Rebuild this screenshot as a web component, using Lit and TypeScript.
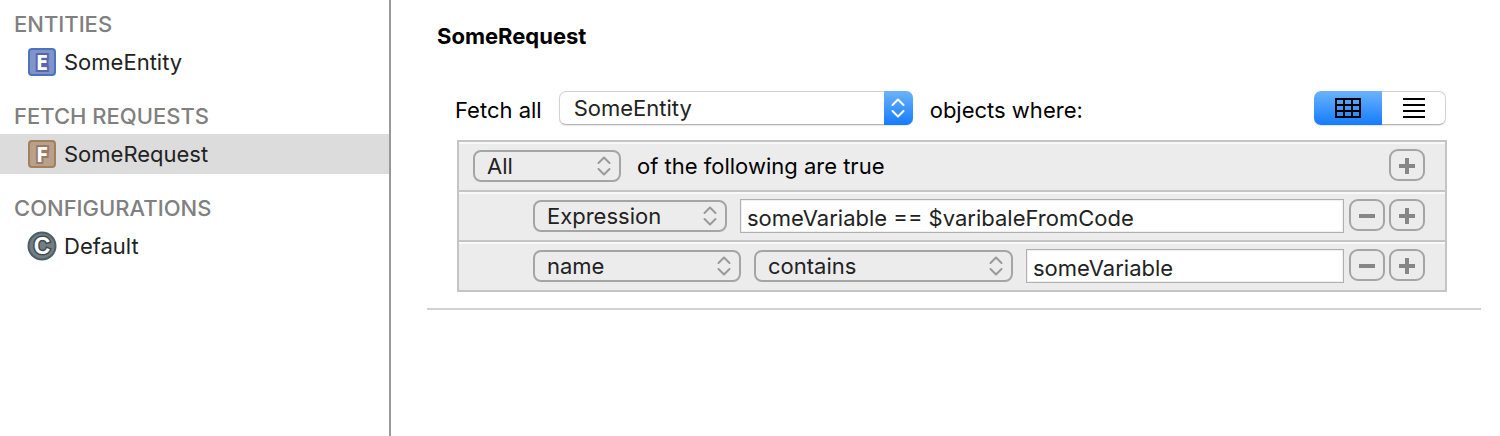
import { LitElement, html, svg, css } from "lit";
import { customElement, property, state } from "lit/decorators.js";

@customElement("entity-badge")
class EntityBadge extends LitElement {
  @property() kind = "E";

  static styles = css`
    :host { display: block; width: 30px; height: 30px; }
    svg { display: block; overflow: visible; }
    text {
      font: bold 22px "Noto Sans", sans-serif;
      text-anchor: middle;
      fill: #fff;
      paint-order: stroke;
      stroke-width: 4px;
    }
    .box { stroke-width: 2px; }
    .entity .box { fill: #8094ca; stroke: #4a74bc; }
    .entity text { stroke: #5566b0; }
    .fetch .box { fill: #b9a088; stroke: #a17f5f; }
    .fetch text { stroke: #9a7b66; }
    .config .box { fill: #6f7f84; stroke: #4e5e64; }
    .config text { stroke: #3f4b50; font: bold 23px "Liberation Sans", sans-serif; stroke-width: 3px; }
  `;

  render() {
    const names: Record<string, string> = { E: "entity", F: "fetch", C: "config" };
    return html`<svg class=${names[this.kind]} width="30" height="30" viewBox="0 0 30 30" aria-hidden="true">
      ${this.kind === "C"
        ? svg`<circle class="box" cx="15" cy="15" r="13.5"></circle>`
        : svg`<rect class="box" x="2" y="2" width="26" height="26" rx="3"></rect>`}
      <text x="15" y="23">${this.kind}</text>
    </svg>`;
  }
}

@customElement("pop-up")
class PopUp extends LitElement {
  @property() label = "";
  @property({ type: Array }) options: string[] = [];
  @property({ type: Boolean, reflect: true }) primary = false;

  static styles = css`
    :host { display: grid; flex: none; color: #222; }
    select, .arrows { grid-area: 1 / 1; }
    select {
      appearance: none;
      box-sizing: border-box;
      width: 100%;
      height: 32px;
      margin: 0;
      padding: 0 36px 0 12px;
      font: inherit;
      color: inherit;
      background: #ececec;
      border: 2px solid #a5a5a5;
      border-radius: 8px;
    }
    .arrows {
      justify-self: end;
      display: grid;
      place-items: center;
      width: 34px;
      pointer-events: none;
      color: #999;
    }
    path { fill: none; stroke: currentColor; stroke-width: 2px; stroke-linecap: round; stroke-linejoin: round; }
    :host([primary]) select {
      height: 34px;
      padding-left: 14px;
      background: #fff;
      border: 1px solid #d2d2d2;
      border-bottom-color: #b4b4b4;
      border-radius: 7px;
      box-shadow: 0 1px 1px #0000001a;
    }
    :host([primary]) .arrows {
      width: 29px;
      color: #fff;
      background: linear-gradient(#6cb3fa, #147bff);
      border-radius: 0 7px 7px 0;
    }
  `;

  render() {
    return html`
      <select aria-label=${this.label}>${this.options.map((o) => html`<option>${o}</option>`)}</select>
      <span class="arrows">
        <svg width="14" height="20" viewBox="0 0 14 20" aria-hidden="true">
          <path d="M1.5 7 7 1.5 12.5 7M1.5 13 7 18.5 12.5 13"></path>
        </svg>
      </span>`;
  }
}

@customElement("row-buttons")
class RowButtons extends LitElement {
  @property({ type: Boolean }) removable = false;

  static styles = css`
    :host { display: flex; gap: 4px; padding-bottom: 2px; }
    button {
      display: grid;
      place-items: center;
      width: 36px;
      height: 32px;
      padding: 0;
      background: #ececec;
      border: 2px solid #a5a5a5;
      border-radius: 9px;
    }
    path { stroke: #868686; stroke-width: 4px; }
  `;

  render() {
    return html`
      ${this.removable
        ? html`<button type="button" aria-label="Remove">
            <svg width="16" height="18" viewBox="0 0 16 18"><path d="M0 10H16"></path></svg>
          </button>`
        : ""}
      <button type="button" aria-label="Add">
        <svg width="16" height="18" viewBox="0 0 16 18"><path d="M0 10H16M8 2V18"></path></svg>
      </button>`;
  }
}

@customElement("app-root")
class AppRoot extends LitElement {
  @state() private selected = "SomeRequest";

  private sections = [
    { title: "ENTITIES", kind: "E", items: ["SomeEntity"] },
    { title: "FETCH REQUESTS", kind: "F", items: ["SomeRequest"] },
    { title: "CONFIGURATIONS", kind: "C", items: ["Default"] },
  ];

  static styles = css`
    :host {
      display: flex;
      min-height: 100vh;
      font: 22px/28px Inter, sans-serif;
      color: #000;
      background: #fff;
    }
    nav {
      box-sizing: border-box;
      flex: none;
      width: 391px;
      padding-top: 6px;
      border-right: 2px solid #999;
    }
    section { margin-bottom: 16px; }
    h2 {
      margin: 0;
      padding-left: 14px;
      font-size: 22px;
      line-height: 36px;
      font-weight: 500;
      color: #808080;
    }
    .item {
      display: flex;
      align-items: center;
      gap: 7px;
      height: 40px;
      padding-left: 27px;
      color: #222;
      text-decoration: none;
    }
    .item.selected { background: #dcdcdc; }
    main { flex: 1; min-width: 0; padding: 22px 19px 0 36px; }
    h1 { margin: 0 10px; font-size: 22px; line-height: 28px; font-weight: 700; }
    .fetch {
      display: flex;
      align-items: center;
      gap: 17px;
      margin: 41px 35px 15px 28px;
    }
    .fetch span { padding-top: 4px; }
    .entity-choice { width: 354px; }
    .modes {
      display: flex;
      margin-left: auto;
      border-radius: 7px;
      box-shadow: 0 1px 1px #0000001a;
    }
    .mode {
      display: grid;
      place-items: center;
      box-sizing: border-box;
      width: 64px;
      height: 34px;
      padding: 0;
      background: #fff;
      border: 1px solid #d2d2d2;
      border-bottom-color: #b4b4b4;
      border-left: 0;
      border-radius: 0 7px 7px 0;
    }
    .mode.on {
      width: 68px;
      background: linear-gradient(#6cb3fa, #147bff);
      border: 0;
      border-radius: 7px 0 0 7px;
    }
    .mode path { fill: none; stroke: #000; stroke-width: 2px; }
    .rules {
      margin: 0 34px 16px 30px;
      border: 2px solid #c4c4c4;
      background: #ececec;
    }
    .rule {
      display: flex;
      align-items: center;
      gap: 5px;
      height: 48px;
      padding: 0 20px 0 74px;
      box-shadow: inset 0 2px #f9f9f9;
    }
    .rule + .rule { border-top: 2px solid #c4c4c4; }
    .rule.group { padding-left: 14px; }
    .fields { display: flex; flex: 1; min-width: 0; align-items: center; gap: 13px; }
    .group .fields { gap: 16px; }
    .quantifier { width: 148px; }
    .operand { width: 194px; }
    .attribute { width: 208px; }
    .operator { width: 259px; }
    input {
      box-sizing: border-box;
      flex: 1;
      min-width: 0;
      height: 34px;
      margin: 0;
      padding: 3px 6px 0;
      font: inherit;
      color: #222;
      background: #fff;
      border: 1px solid #b0b0b0;
      border-radius: 0;
      box-shadow: inset 0 0 0 1px #f0f0f0;
    }
    hr { margin: 0; border: 0; border-top: 2px solid #d2d2d2; }
  `;

  render() {
    return html`
      <nav>
        ${this.sections.map(
          (s) => html`<section>
            <h2>${s.title}</h2>
            ${s.items.map(
              (name) => html`<a
                class="item ${name === this.selected ? "selected" : ""}"
                href="#${name}"
                @click=${() => (this.selected = name)}
                ><entity-badge kind=${s.kind}></entity-badge>${name}</a>`
            )}
          </section>`
        )}
      </nav>
      <main>
        <h1>SomeRequest</h1>
        <div class="fetch">
          <span>Fetch all</span>
          <pop-up class="entity-choice" primary label="Entity" .options=${["SomeEntity"]}></pop-up>
          <span>objects where:</span>
          <div class="modes">
            <button class="mode on" type="button" aria-label="Table">
              <svg width="26" height="20" viewBox="0 0 26 20"><path d="M1 1H25V19H1ZM1 7H25M1 13H25M9 1V19M17 1V19"></path></svg>
            </button>
            <button class="mode" type="button" aria-label="Text">
              <svg width="22" height="20" viewBox="0 0 22 20"><path d="M0 1H22M0 7H22M0 13H22M0 19H22"></path></svg>
            </button>
          </div>
        </div>
        <div class="rules">
          <div class="rule group">
            <div class="fields">
              <pop-up class="quantifier" label="Match" .options=${["All", "Any", "None"]}></pop-up>
              <span>of the following are true</span>
            </div>
            <row-buttons></row-buttons>
          </div>
          <div class="rule">
            <div class="fields">
              <pop-up class="operand" label="Operand" .options=${["Expression"]}></pop-up>
              <input type="text" aria-label="Expression" .value=${"someVariable == $varibaleFromCode"} />
            </div>
            <row-buttons removable></row-buttons>
          </div>
          <div class="rule">
            <div class="fields">
              <pop-up class="attribute" label="Attribute" .options=${["name"]}></pop-up>
              <pop-up class="operator" label="Operator" .options=${["contains"]}></pop-up>
              <input type="text" aria-label="Value" .value=${"someVariable"} />
            </div>
            <row-buttons removable></row-buttons>
          </div>
        </div>
        <hr />
      </main>
    `;
  }
}
